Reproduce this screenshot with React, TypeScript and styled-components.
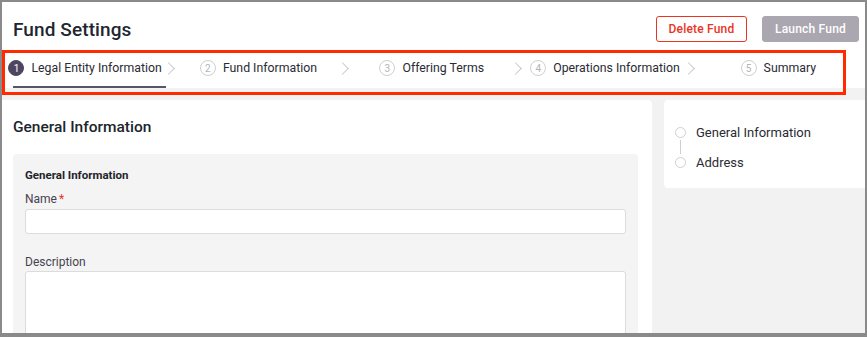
import React from 'react'
import styled, { createGlobalStyle } from 'styled-components'

const GlobalStyle = createGlobalStyle`
  body {
    margin: 0;
    font-family: Roboto, "Liberation Sans", Arial, sans-serif;
    background: #fff;
  }
`

const Frame = styled.div`
  position: relative;
  width: 867px;
  height: 337px;
  box-sizing: border-box;
  border: 2px solid #8a8a8a;
  border-bottom-width: 4px;
  overflow: hidden;
  background: #f2f2f2;
  display: flex;
  flex-direction: column;
`

const Header = styled.header`
  background: #fff;
`

const TitleRow = styled.div`
  display: flex;
  align-items: center;
  height: 26px;
  padding: 14px 6px 0 11px;
`

const Title = styled.h1`
  flex: 1;
  margin: 0;
  font-size: 19px;
  font-weight: 500;
  color: #1e2631;
  letter-spacing: 0.1px;
`

const Actions = styled.div`
  display: flex;
  gap: 15px;
`

const Button = styled.button<{ $variant: 'danger' | 'muted' }>`
  height: 26px;
  box-sizing: border-box;
  padding: 0;
  white-space: nowrap;
  border-radius: 3px;
  font-family: inherit;
  font-size: 12px;
  font-weight: 500;
  letter-spacing: 0.2px;
  border: 1px solid ${p => (p.$variant === 'danger' ? '#e8351f' : '#aaa7b1')};
  background: ${p => (p.$variant === 'danger' ? '#fff' : '#aaa7b1')};
  color: ${p => (p.$variant === 'danger' ? '#e8351f' : '#fff')};
  width: ${p => (p.$variant === 'danger' ? '91px' : '97px')};
`

const Steps = styled.nav`
  display: flex;
  margin-top: 10px;
  padding-left: 1px;
`

const Step = styled.div<{ $active?: boolean; $last?: boolean }>`
  position: relative;
  flex: 0 0 173.3px;
  height: 36px;
  padding: 8px 9px 12px 0;
  box-sizing: border-box;
  display: flex;
  justify-content: center;
  align-items: center;
  gap: 7px;

  &::before {
    content: '';
    display: ${p => (p.$active ? 'block' : 'none')};
    position: absolute;
    left: 10px;
    right: 10px;
    bottom: 0;
    height: 2px;
    background: #5a536d;
  }

  &::after {
    content: '';
    display: ${p => (p.$last ? 'none' : 'block')};
    position: absolute;
    right: 3px;
    top: 12px;
    width: 8px;
    height: 8px;
    border-top: 1px solid #c9c9cc;
    border-right: 1px solid #c9c9cc;
    transform: rotate(45deg);
  }
`

const StepNum = styled.span<{ $active?: boolean }>`
  flex-shrink: 0;
  width: 16px;
  height: 16px;
  box-sizing: border-box;
  border-radius: 50%;
  display: flex;
  align-items: center;
  justify-content: center;
  font-size: 10px;
  border: 1px solid ${p => (p.$active ? '#4e4661' : '#cfcfd2')};
  background: ${p => (p.$active ? '#4e4661' : '#fff')};
  color: ${p => (p.$active ? '#fff' : '#b3b3b8')};
`

const StepLabel = styled.span`
  font-size: 12.3px;
  color: #2a2b33;
  white-space: nowrap;
`

const Annotation = styled.div`
  position: absolute;
  left: 0;
  top: 48px;
  width: 844px;
  height: 45px;
  box-sizing: border-box;
  border: 3px solid #ff2a00;
  pointer-events: none;
`

const Main = styled.main`
  flex: 1;
  display: flex;
  gap: 12px;
  padding-top: 12px;
`

const FormPanel = styled.section`
  width: 650px;
  flex-shrink: 0;
  background: #fff;
  border-radius: 0 4px 0 0;
  padding: 0 14px 0 11px;
  box-sizing: border-box;
`

const PanelTitle = styled.h2`
  margin: 17px 0 17px;
  font-size: 15.5px;
  font-weight: 500;
  color: #20242c;
  line-height: 20px;
`

const Card = styled.div`
  background: #f4f4f4;
  border-radius: 4px;
  padding: 14px 12px 0;
  height: 200px;
`

const CardTitle = styled.div`
  font-size: 11.5px;
  font-weight: 700;
  color: #22242b;
  line-height: 14px;
  margin-bottom: 10px;
`

const Label = styled.label<{ $gap: number }>`
  display: block;
  font-size: 12px;
  color: #45434f;
  line-height: 14px;
  margin-bottom: ${p => p.$gap}px;
`

const Required = styled.span`
  color: #e8351f;
  margin-left: 2px;
`

const Input = styled.div`
  height: 23px;
  background: #fff;
  border: 1px solid #dcdcdf;
  border-radius: 3px;
  margin-bottom: 21px;
`

const TextArea = styled(Input)`
  height: 120px;
  margin-bottom: 0;
`

const OutlinePanel = styled.aside`
  flex: 1;
  align-self: flex-start;
  height: 88px;
  background: #fff;
  border-radius: 4px 0 0 4px;
  padding: 24px 0 0 11px;
  box-sizing: border-box;
`

const OutlineItem = styled.div`
  display: flex;
  align-items: center;
  gap: 10px;
  height: 16px;
  font-size: 13px;
  color: #2a2b33;
`

const Dot = styled.span`
  width: 11px;
  height: 11px;
  box-sizing: border-box;
  border: 1px solid #d0d0d3;
  border-radius: 50%;
`

const Connector = styled.div`
  width: 1px;
  height: 14px;
  margin-left: 5px;
  background: #d0d0d3;
`

const steps = [
  'Legal Entity Information',
  'Fund Information',
  'Offering Terms',
  'Operations Information',
  'Summary',
]

export default function App() {
  return (
    <Frame>
      <GlobalStyle />
      <Header>
        <TitleRow>
          <Title>Fund Settings</Title>
          <Actions>
            <Button $variant="danger">Delete Fund</Button>
            <Button $variant="muted">Launch Fund</Button>
          </Actions>
        </TitleRow>
        <Steps>
          {steps.map((s, i) => (
            <Step key={s} $active={i === 0} $last={i === steps.length - 1}>
              <StepNum $active={i === 0}>{i + 1}</StepNum>
              <StepLabel>{s}</StepLabel>
            </Step>
          ))}
        </Steps>
      </Header>
      <Main>
        <FormPanel>
          <PanelTitle>General Information</PanelTitle>
          <Card>
            <CardTitle>General Information</CardTitle>
            <Label $gap={3}>
              Name<Required>*</Required>
            </Label>
            <Input />
            <Label $gap={2}>Description</Label>
            <TextArea />
          </Card>
        </FormPanel>
        <OutlinePanel>
          <OutlineItem>
            <Dot />
            General Information
          </OutlineItem>
          <Connector />
          <OutlineItem>
            <Dot />
            Address
          </OutlineItem>
        </OutlinePanel>
      </Main>
      <Annotation />
    </Frame>
  )
}
